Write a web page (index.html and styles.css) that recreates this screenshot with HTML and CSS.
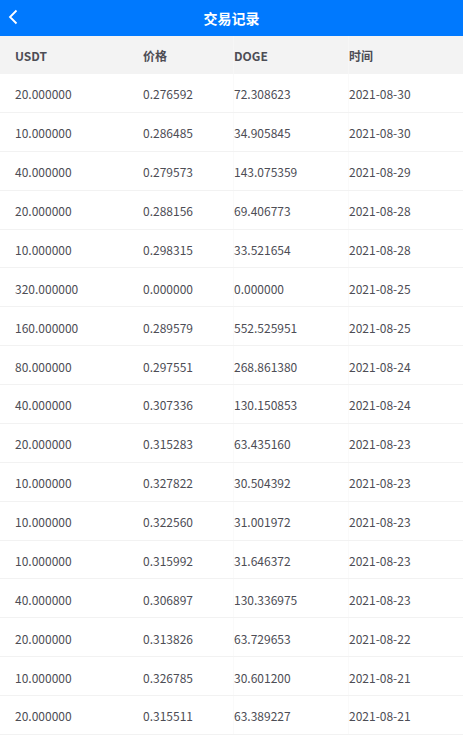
FILE: index.html
```html
<!DOCTYPE html>
<html lang="zh-CN">
<head>
<meta charset="utf-8">
<title>交易记录</title>
<link rel="stylesheet" href="styles.css">
</head>
<body>
<header class="topbar">
  <a class="back" href="#" aria-label="返回">
    <svg width="10" height="16" viewBox="0 0 10 16"><path d="M8.5 1.5 L2 8 L8.5 14.5" fill="none" stroke="#fff" stroke-width="1.8"/></svg>
  </a>
  <h1 class="title">交易记录</h1>
</header>
<div class="table">
  <div class="row head">
    <div class="cell">USDT</div><div class="cell">价格</div><div class="cell">DOGE</div><div class="cell">时间</div>
  </div>
  <div class="row"><div class="cell">20.000000</div><div class="cell">0.276592</div><div class="cell">72.308623</div><div class="cell">2021-08-30</div></div>
  <div class="row"><div class="cell">10.000000</div><div class="cell">0.286485</div><div class="cell">34.905845</div><div class="cell">2021-08-30</div></div>
  <div class="row"><div class="cell">40.000000</div><div class="cell">0.279573</div><div class="cell">143.075359</div><div class="cell">2021-08-29</div></div>
  <div class="row"><div class="cell">20.000000</div><div class="cell">0.288156</div><div class="cell">69.406773</div><div class="cell">2021-08-28</div></div>
  <div class="row"><div class="cell">10.000000</div><div class="cell">0.298315</div><div class="cell">33.521654</div><div class="cell">2021-08-28</div></div>
  <div class="row"><div class="cell">320.000000</div><div class="cell">0.000000</div><div class="cell">0.000000</div><div class="cell">2021-08-25</div></div>
  <div class="row"><div class="cell">160.000000</div><div class="cell">0.289579</div><div class="cell">552.525951</div><div class="cell">2021-08-25</div></div>
  <div class="row"><div class="cell">80.000000</div><div class="cell">0.297551</div><div class="cell">268.861380</div><div class="cell">2021-08-24</div></div>
  <div class="row"><div class="cell">40.000000</div><div class="cell">0.307336</div><div class="cell">130.150853</div><div class="cell">2021-08-24</div></div>
  <div class="row"><div class="cell">20.000000</div><div class="cell">0.315283</div><div class="cell">63.435160</div><div class="cell">2021-08-23</div></div>
  <div class="row"><div class="cell">10.000000</div><div class="cell">0.327822</div><div class="cell">30.504392</div><div class="cell">2021-08-23</div></div>
  <div class="row"><div class="cell">10.000000</div><div class="cell">0.322560</div><div class="cell">31.001972</div><div class="cell">2021-08-23</div></div>
  <div class="row"><div class="cell">10.000000</div><div class="cell">0.315992</div><div class="cell">31.646372</div><div class="cell">2021-08-23</div></div>
  <div class="row"><div class="cell">40.000000</div><div class="cell">0.306897</div><div class="cell">130.336975</div><div class="cell">2021-08-23</div></div>
  <div class="row"><div class="cell">20.000000</div><div class="cell">0.313826</div><div class="cell">63.729653</div><div class="cell">2021-08-22</div></div>
  <div class="row"><div class="cell">10.000000</div><div class="cell">0.326785</div><div class="cell">30.601200</div><div class="cell">2021-08-21</div></div>
  <div class="row"><div class="cell">20.000000</div><div class="cell">0.315511</div><div class="cell">63.389227</div><div class="cell">2021-08-21</div></div>
</div>
</body>
</html>
```
FILE: styles.css
```css
html, body {
  margin: 0;
  padding: 0;
  background: #fff;
}
body {
  font-family: "Noto Sans CJK SC", "Noto Sans", sans-serif;
  color: #4d4d55;
  overflow: hidden;
}
.topbar {
  height: 36px;
  background: #0079fe;
  display: flex;
  align-items: center;
  justify-content: center;
  position: relative;
}
.back {
  position: absolute;
  left: 8px;
  top: 9px;
  display: block;
  width: 10px;
  height: 16px;
}
.back svg { display: block; }
.title {
  margin: 0;
  font-size: 14px;
  font-weight: bold;
  color: #fff;
  line-height: 36px;
}
.table {
  display: flex;
  flex-direction: column;
}
.row {
  display: grid;
  grid-template-columns: 143px 90px 115px 1fr;
  height: 37.875px;
  border-bottom: 1px solid #f2f2f2;
  font-size: 12px;
}
.row.head {
  background: #f3f3f3;
  height: 38px;
  border-bottom: none;
  font-weight: bold;
}
.cell {
  display: flex;
  align-items: center;
  white-space: nowrap;
  box-sizing: border-box;
  padding-top: 2px;
}
.head .cell {
  padding-top: 0;
}
.cell:first-child {
  padding-left: 15px;
}
.cell:nth-child(3), .cell:nth-child(4) {
  border-left: 1px solid #fafafa;
}
.head .cell:nth-child(3), .head .cell:nth-child(4) {
  border-left-color: #f6f6f6;
}
```
